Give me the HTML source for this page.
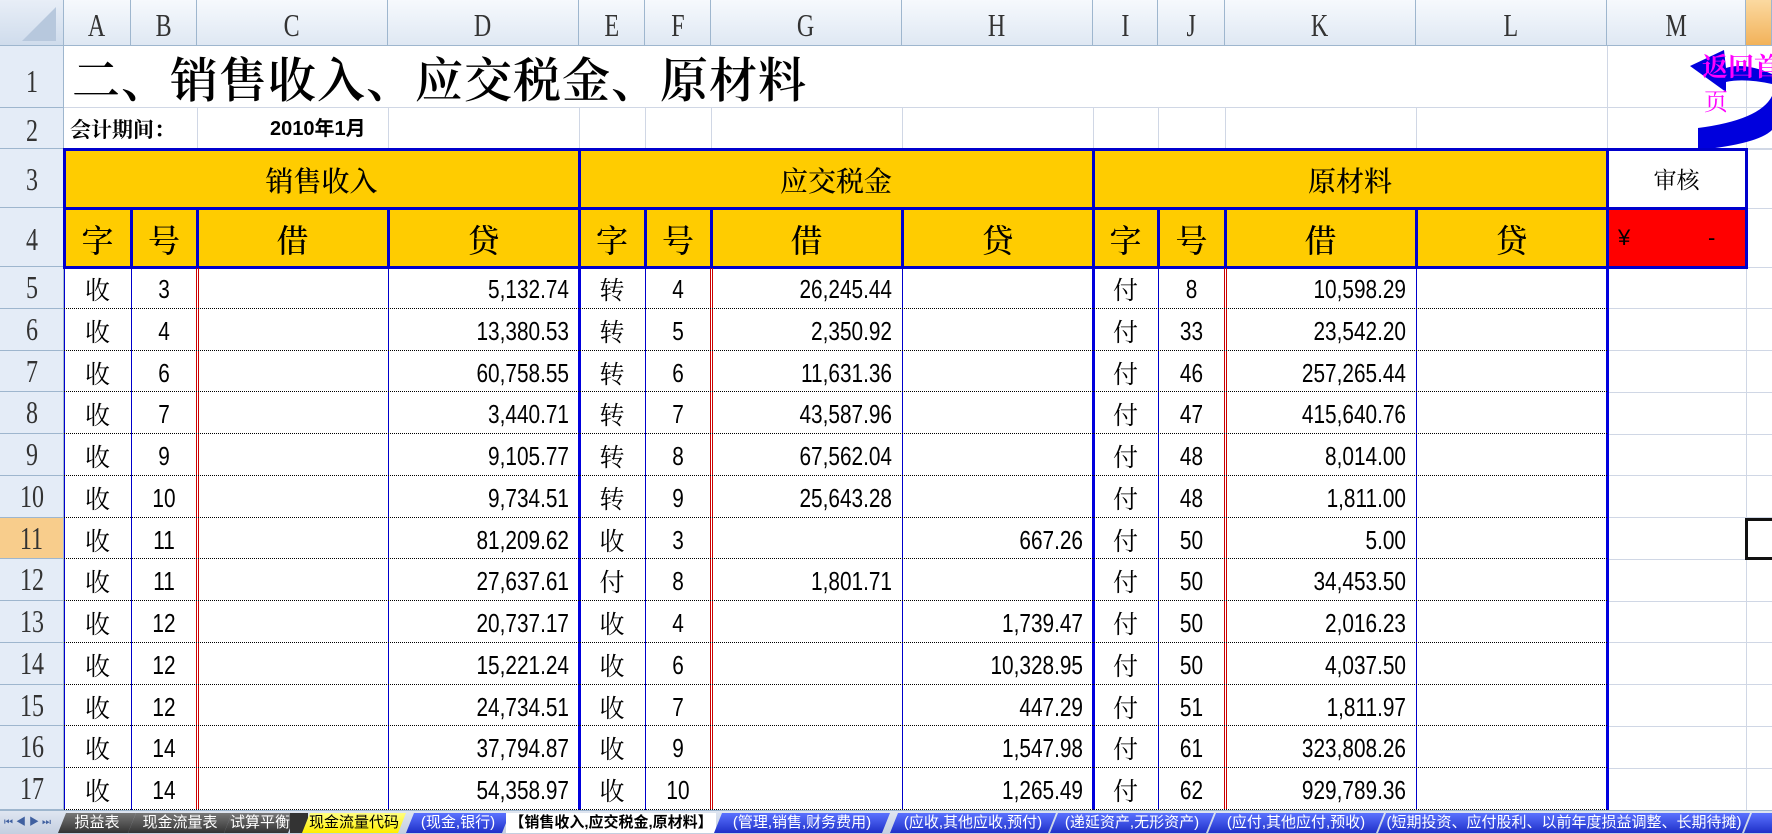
<!DOCTYPE html>
<html><head><meta charset="utf-8">
<style>
*{margin:0;padding:0;box-sizing:border-box}
body{width:1772px;height:834px;overflow:hidden;background:#fff;position:relative;font-family:"Liberation Sans","Noto Sans CJK SC",sans-serif;color:#000}
.a{position:absolute}
.ch{position:absolute;top:0;height:46px;background:linear-gradient(#f6f9fd,#dfe8f3);border-right:1px solid #9eb6ce;border-bottom:1px solid #9eb6ce;text-align:center;font-family:"Liberation Serif",serif;font-size:32px;line-height:50px;color:#333}
.ch span,.rh span{display:inline-block;transform:scaleX(.75)}
.rh{position:absolute;left:0;width:64px;background:#e4ecf7;border-bottom:1px solid #9eb6ce;border-right:1px solid #9eb6ce;text-align:center;font-family:"Liberation Serif",serif;font-size:32px;color:#333}
.g{position:absolute;background:#d0d7e5}
.b{position:absolute;background:#0000cc}
.r{position:absolute;left:64px;width:1543px;height:41.77px;border-bottom:1px dotted #000}
.r span{position:absolute;top:0;line-height:44px;font-size:26px;height:41px}
.r .n{font-family:"Liberation Sans Narrow","Liberation Sans",sans-serif;transform:scaleX(.8)}
.cA,.cE,.cI{font-family:"Noto Serif CJK SC","Noto Sans CJK SC",serif;font-size:25px!important}
.cA{left:0;width:67px;text-align:center}
.cB{left:67px;width:66px;text-align:center}
.cD{left:324px;width:181px;text-align:right;transform-origin:right center}
.cE{left:515px;width:66px;text-align:center}
.cF{left:581px;width:66px;text-align:center}
.cG{left:647px;width:181px;text-align:right;transform-origin:right center}
.cH{left:838px;width:181px;text-align:right;transform-origin:right center}
.cI{left:1029px;width:65px;text-align:center}
.cJ{left:1094px;width:67px;text-align:center}
.cK{left:1161px;width:181px;text-align:right;transform-origin:right center}
.hd{position:absolute;text-align:center;font-family:"Noto Serif CJK SC","Noto Sans CJK SC",serif;font-size:28px;font-weight:500}
.tab{position:absolute;top:813px;height:20px;font-size:15px;line-height:20px;text-align:center;font-family:"Liberation Sans","Noto Sans CJK SC",sans-serif;white-space:nowrap;overflow:hidden;clip-path:polygon(8px 0,100% 0,calc(100% - 8px) 100%,0 100%)}
.tg{background:linear-gradient(#777,#333);color:#fff}
.tb{background:linear-gradient(#5a72ff,#1f30c8);color:#fff}
</style></head><body>

<div class="ch" style="left:0;width:64px;background:linear-gradient(#e8eef7,#cfdcec)"><svg width="60" height="44" style="position:absolute;left:2px;top:1px"><polygon points="54,6 54,40 20,40" fill="#b7c8dd"/></svg></div>
<div class="ch" style="left:64px;width:67px"><span>A</span></div>
<div class="ch" style="left:131px;width:66px"><span>B</span></div>
<div class="ch" style="left:197px;width:191px"><span>C</span></div>
<div class="ch" style="left:388px;width:191px"><span>D</span></div>
<div class="ch" style="left:579px;width:66px"><span>E</span></div>
<div class="ch" style="left:645px;width:66px"><span>F</span></div>
<div class="ch" style="left:711px;width:191px"><span>G</span></div>
<div class="ch" style="left:902px;width:191px"><span>H</span></div>
<div class="ch" style="left:1093px;width:65px"><span>I</span></div>
<div class="ch" style="left:1158px;width:67px"><span>J</span></div>
<div class="ch" style="left:1225px;width:191px"><span>K</span></div>
<div class="ch" style="left:1416px;width:191px"><span>L</span></div>
<div class="ch" style="left:1607px;width:139px"><span>M</span></div>
<div class="ch" style="left:1746px;width:26px;background:linear-gradient(#fbd9a0,#f2b25a)"></div>

<div class="rh" style="top:46px;height:62px;line-height:70px"><span>1</span></div>
<div class="rh" style="top:108px;height:41px;line-height:44px"><span>2</span></div>
<div class="rh" style="top:149px;height:59px;line-height:60px"><span>3</span></div>
<div class="rh" style="top:208px;height:59px;line-height:62px"><span>4</span></div>
<div class="rh" style="top:267px;height:41.77px;line-height:40px"><span>5</span></div>
<div class="rh" style="top:308.77px;height:41.77px;line-height:40px"><span>6</span></div>
<div class="rh" style="top:350.54px;height:41.77px;line-height:40px"><span>7</span></div>
<div class="rh" style="top:392.31px;height:41.77px;line-height:40px"><span>8</span></div>
<div class="rh" style="top:434.08px;height:41.77px;line-height:40px"><span>9</span></div>
<div class="rh" style="top:475.85px;height:41.77px;line-height:40px"><span>10</span></div>
<div class="rh" style="top:517.62px;height:41.77px;line-height:40px;background:#f8cd8c"><span>11</span></div>
<div class="rh" style="top:559.39px;height:41.77px;line-height:40px"><span>12</span></div>
<div class="rh" style="top:601.16px;height:41.77px;line-height:40px"><span>13</span></div>
<div class="rh" style="top:642.93px;height:41.77px;line-height:40px"><span>14</span></div>
<div class="rh" style="top:684.7px;height:41.77px;line-height:40px"><span>15</span></div>
<div class="rh" style="top:726.47px;height:41.77px;line-height:40px"><span>16</span></div>
<div class="rh" style="top:768.24px;height:42px;line-height:40px"><span>17</span></div>

<div class="g" style="left:64px;top:107px;width:1708px;height:1px"></div>
<div class="g" style="left:64px;top:148px;width:1708px;height:1px"></div>
<div class="g" style="left:197px;top:108px;width:1px;height:41px"></div>
<div class="g" style="left:388px;top:108px;width:1px;height:41px"></div>
<div class="g" style="left:579px;top:108px;width:1px;height:41px"></div>
<div class="g" style="left:645px;top:108px;width:1px;height:41px"></div>
<div class="g" style="left:711px;top:108px;width:1px;height:41px"></div>
<div class="g" style="left:902px;top:108px;width:1px;height:41px"></div>
<div class="g" style="left:1093px;top:108px;width:1px;height:41px"></div>
<div class="g" style="left:1158px;top:108px;width:1px;height:41px"></div>
<div class="g" style="left:1225px;top:108px;width:1px;height:41px"></div>
<div class="g" style="left:1416px;top:108px;width:1px;height:41px"></div>
<div class="g" style="left:1607px;top:46px;width:1px;height:103px"></div>
<div class="g" style="left:1746px;top:46px;width:1px;height:764px"></div>
<div class="g" style="left:1607px;top:308px;width:165px;height:1px"></div>
<div class="g" style="left:1607px;top:350px;width:165px;height:1px"></div>
<div class="g" style="left:1607px;top:392px;width:165px;height:1px"></div>
<div class="g" style="left:1607px;top:434px;width:165px;height:1px"></div>
<div class="g" style="left:1607px;top:475px;width:165px;height:1px"></div>
<div class="g" style="left:1607px;top:517px;width:165px;height:1px"></div>
<div class="g" style="left:1607px;top:559px;width:165px;height:1px"></div>
<div class="g" style="left:1607px;top:601px;width:165px;height:1px"></div>
<div class="g" style="left:1607px;top:642px;width:165px;height:1px"></div>
<div class="g" style="left:1607px;top:684px;width:165px;height:1px"></div>
<div class="g" style="left:1607px;top:726px;width:165px;height:1px"></div>
<div class="g" style="left:1607px;top:768px;width:165px;height:1px"></div>
<div class="g" style="left:1746px;top:149px;width:26px;height:1px"></div>
<div class="g" style="left:1746px;top:208px;width:26px;height:1px"></div>
<div class="g" style="left:1746px;top:267px;width:26px;height:1px"></div>

<div class="a" style="left:72px;top:48px;font-family:'Noto Serif CJK SC','Noto Sans CJK SC',serif;font-size:48px;line-height:58px;font-weight:600;letter-spacing:1px">二、销售收入、应交税金、原材料</div>
<div class="a" style="left:70px;top:112px;font-family:'Noto Serif CJK SC',sans-serif;font-size:21px;line-height:34px;font-weight:700">会计期间：</div>
<div class="a" style="left:270px;top:112px;font-family:'Liberation Sans','Noto Sans CJK SC',sans-serif;font-size:20px;line-height:34px;font-weight:bold">2010年1月</div>

<svg class="a" style="left:1680px;top:40px" width="92" height="110">
<path d="M92 34 Q64 22 46 28 L44 10 L10 26 L46 52 L46 42 Q64 38 92 44 Z" fill="#0000dd"/>
<path d="M92 56 Q80 80 18 88 L18 110 Q78 104 92 90 Z" fill="#0000dd"/>
<text x="22" y="36" font-size="26" fill="#ff00ff" font-weight="bold" font-family="Noto Serif CJK SC,serif">返回首</text>
<text x="24" y="70" font-size="24" fill="#ff00ff" font-family="Noto Serif CJK SC,serif">页</text>
</svg>

<div class="a" style="left:64px;top:149px;width:1543px;height:118px;background:#ffcc00"></div>
<div class="a" style="left:1607px;top:208px;width:139px;height:59px;background:#ff0000"></div>
<div class="b" style="left:64px;top:148px;width:1683px;height:3px"></div>
<div class="b" style="left:64px;top:207px;width:1683px;height:3px"></div>
<div class="b" style="left:64px;top:266px;width:1683px;height:3px"></div>
<div class="b" style="left:63px;top:148px;width:3px;height:121px"></div>
<div class="b" style="left:578px;top:148px;width:3px;height:121px"></div>
<div class="b" style="left:1092px;top:148px;width:3px;height:121px"></div>
<div class="b" style="left:1606px;top:148px;width:3px;height:121px"></div>
<div class="b" style="left:1745px;top:148px;width:3px;height:121px"></div>
<div class="b" style="left:130px;top:208px;width:3px;height:60px"></div>
<div class="b" style="left:196px;top:208px;width:3px;height:60px"></div>
<div class="b" style="left:387px;top:208px;width:3px;height:60px"></div>
<div class="b" style="left:644px;top:208px;width:3px;height:60px"></div>
<div class="b" style="left:710px;top:208px;width:3px;height:60px"></div>
<div class="b" style="left:901px;top:208px;width:3px;height:60px"></div>
<div class="b" style="left:1157px;top:208px;width:3px;height:60px"></div>
<div class="b" style="left:1224px;top:208px;width:3px;height:60px"></div>
<div class="b" style="left:1415px;top:208px;width:3px;height:60px"></div>

<div class="hd" style="left:64px;top:152px;width:515px;line-height:56px">销售收入</div>
<div class="hd" style="left:579px;top:152px;width:514px;line-height:56px">应交税金</div>
<div class="hd" style="left:1093px;top:152px;width:514px;line-height:56px">原材料</div>
<div class="hd" style="left:1607px;top:151px;width:139px;line-height:56px;font-size:23px;font-weight:400">审核</div>
<div class="hd" style="left:64px;top:211px;width:67px;line-height:56px;font-size:32px">字</div>
<div class="hd" style="left:131px;top:211px;width:66px;line-height:56px;font-size:32px">号</div>
<div class="hd" style="left:197px;top:211px;width:191px;line-height:56px;font-size:32px">借</div>
<div class="hd" style="left:388px;top:211px;width:191px;line-height:56px;font-size:32px">贷</div>
<div class="hd" style="left:579px;top:211px;width:66px;line-height:56px;font-size:32px">字</div>
<div class="hd" style="left:645px;top:211px;width:66px;line-height:56px;font-size:32px">号</div>
<div class="hd" style="left:711px;top:211px;width:191px;line-height:56px;font-size:32px">借</div>
<div class="hd" style="left:902px;top:211px;width:191px;line-height:56px;font-size:32px">贷</div>
<div class="hd" style="left:1093px;top:211px;width:65px;line-height:56px;font-size:32px">字</div>
<div class="hd" style="left:1158px;top:211px;width:67px;line-height:56px;font-size:32px">号</div>
<div class="hd" style="left:1225px;top:211px;width:191px;line-height:56px;font-size:32px">借</div>
<div class="hd" style="left:1416px;top:211px;width:191px;line-height:56px;font-size:32px">贷</div>
<div class="a" style="left:1618px;top:210px;line-height:56px;font-size:22px">¥</div>
<div class="a" style="left:1708px;top:210px;line-height:56px;font-size:22px">-</div>

<div class="a" style="left:64px;top:268px;width:1px;height:542px;background:#0000cc"></div>
<div class="a" style="left:131px;top:268px;width:1px;height:542px;background:#0000cc"></div>
<div class="a" style="left:196px;top:268px;width:1px;height:542px;background:#cc0000"></div>
<div class="a" style="left:198px;top:268px;width:1px;height:542px;background:#cc0000"></div>
<div class="a" style="left:388px;top:268px;width:1px;height:542px;background:#0000cc"></div>
<div class="a" style="left:578px;top:268px;width:3px;height:542px;background:#0000dd"></div>
<div class="a" style="left:645px;top:268px;width:1px;height:542px;background:#0000cc"></div>
<div class="a" style="left:710px;top:268px;width:1px;height:542px;background:#cc0000"></div>
<div class="a" style="left:712px;top:268px;width:1px;height:542px;background:#cc0000"></div>
<div class="a" style="left:902px;top:268px;width:1px;height:542px;background:#0000cc"></div>
<div class="a" style="left:1092px;top:268px;width:3px;height:542px;background:#0000dd"></div>
<div class="a" style="left:1158px;top:268px;width:1px;height:542px;background:#0000cc"></div>
<div class="a" style="left:1224px;top:268px;width:1px;height:542px;background:#cc0000"></div>
<div class="a" style="left:1226px;top:268px;width:1px;height:542px;background:#cc0000"></div>
<div class="a" style="left:1416px;top:268px;width:1px;height:542px;background:#0000cc"></div>
<div class="a" style="left:1606px;top:268px;width:3px;height:542px;background:#0000dd"></div>

<div class="a" style="left:1745px;top:518px;width:40px;height:42px;border:3px solid #111"></div>

<div class="r" style="top:267px"><span class="cA">收</span><span class="cB n">3</span><span class="cD n">5,132.74</span><span class="cE">转</span><span class="cF n">4</span><span class="cG n">26,245.44</span><span class="cI">付</span><span class="cJ n">8</span><span class="cK n">10,598.29</span></div>
<div class="r" style="top:308.77px"><span class="cA">收</span><span class="cB n">4</span><span class="cD n">13,380.53</span><span class="cE">转</span><span class="cF n">5</span><span class="cG n">2,350.92</span><span class="cI">付</span><span class="cJ n">33</span><span class="cK n">23,542.20</span></div>
<div class="r" style="top:350.54px"><span class="cA">收</span><span class="cB n">6</span><span class="cD n">60,758.55</span><span class="cE">转</span><span class="cF n">6</span><span class="cG n">11,631.36</span><span class="cI">付</span><span class="cJ n">46</span><span class="cK n">257,265.44</span></div>
<div class="r" style="top:392.31px"><span class="cA">收</span><span class="cB n">7</span><span class="cD n">3,440.71</span><span class="cE">转</span><span class="cF n">7</span><span class="cG n">43,587.96</span><span class="cI">付</span><span class="cJ n">47</span><span class="cK n">415,640.76</span></div>
<div class="r" style="top:434.08px"><span class="cA">收</span><span class="cB n">9</span><span class="cD n">9,105.77</span><span class="cE">转</span><span class="cF n">8</span><span class="cG n">67,562.04</span><span class="cI">付</span><span class="cJ n">48</span><span class="cK n">8,014.00</span></div>
<div class="r" style="top:475.85px"><span class="cA">收</span><span class="cB n">10</span><span class="cD n">9,734.51</span><span class="cE">转</span><span class="cF n">9</span><span class="cG n">25,643.28</span><span class="cI">付</span><span class="cJ n">48</span><span class="cK n">1,811.00</span></div>
<div class="r" style="top:517.62px"><span class="cA">收</span><span class="cB n">11</span><span class="cD n">81,209.62</span><span class="cE">收</span><span class="cF n">3</span><span class="cH n">667.26</span><span class="cI">付</span><span class="cJ n">50</span><span class="cK n">5.00</span></div>
<div class="r" style="top:559.39px"><span class="cA">收</span><span class="cB n">11</span><span class="cD n">27,637.61</span><span class="cE">付</span><span class="cF n">8</span><span class="cG n">1,801.71</span><span class="cI">付</span><span class="cJ n">50</span><span class="cK n">34,453.50</span></div>
<div class="r" style="top:601.16px"><span class="cA">收</span><span class="cB n">12</span><span class="cD n">20,737.17</span><span class="cE">收</span><span class="cF n">4</span><span class="cH n">1,739.47</span><span class="cI">付</span><span class="cJ n">50</span><span class="cK n">2,016.23</span></div>
<div class="r" style="top:642.93px"><span class="cA">收</span><span class="cB n">12</span><span class="cD n">15,221.24</span><span class="cE">收</span><span class="cF n">6</span><span class="cH n">10,328.95</span><span class="cI">付</span><span class="cJ n">50</span><span class="cK n">4,037.50</span></div>
<div class="r" style="top:684.7px"><span class="cA">收</span><span class="cB n">12</span><span class="cD n">24,734.51</span><span class="cE">收</span><span class="cF n">7</span><span class="cH n">447.29</span><span class="cI">付</span><span class="cJ n">51</span><span class="cK n">1,811.97</span></div>
<div class="r" style="top:726.47px"><span class="cA">收</span><span class="cB n">14</span><span class="cD n">37,794.87</span><span class="cE">收</span><span class="cF n">9</span><span class="cH n">1,547.98</span><span class="cI">付</span><span class="cJ n">61</span><span class="cK n">323,808.26</span></div>
<div class="r" style="top:768.24px"><span class="cA">收</span><span class="cB n">14</span><span class="cD n">54,358.97</span><span class="cE">收</span><span class="cF n">10</span><span class="cH n">1,265.49</span><span class="cI">付</span><span class="cJ n">62</span><span class="cK n">929,789.36</span></div>

<div class="a" style="left:0;top:810px;width:1772px;height:24px;background:linear-gradient(#dfe6f1,#c4cfe0);border-top:1px solid #9eb6ce"></div>
<div class="a" style="left:4px;top:813px;font-size:10px;line-height:20px;color:#4060a0;letter-spacing:3px">⏮◀▶⏭</div>
<div class="tab tg" style="left:58px;width:78px">损益表</div>
<div class="tab tg" style="left:128px;width:104px">现金流量表</div>
<div class="tab tg" style="left:224px;width:72px">试算平衡</div>
<div class="a" style="left:290px;top:813px;width:18px;height:20px;background:#333"></div>
<div class="tab" style="left:302px;width:104px;background:linear-gradient(#ffff80,#ffee00)">现金流量代码</div>
<div class="tab tb" style="left:406px;width:104px">(现金,银行)</div>
<div class="tab" style="left:506px;width:210px;background:#fff;font-weight:bold;clip-path:none">【销售收入,应交税金,原材料】</div>
<div class="tab tb" style="left:714px;width:176px">(管理,销售,财务费用)</div>
<div class="tab tb" style="left:890px;width:166px">(应收,其他应收,预付)</div>
<div class="tab tb" style="left:1050px;width:164px">(递延资产,无形资产)</div>
<div class="tab tb" style="left:1208px;width:176px">(应付,其他应付,预收)</div>
<div class="tab tb" style="left:1378px;width:372px">(短期投资、应付股利、以前年度损益调整、长期待摊)</div>
<div class="tab tb" style="left:1744px;width:40px"></div>
</body></html>
